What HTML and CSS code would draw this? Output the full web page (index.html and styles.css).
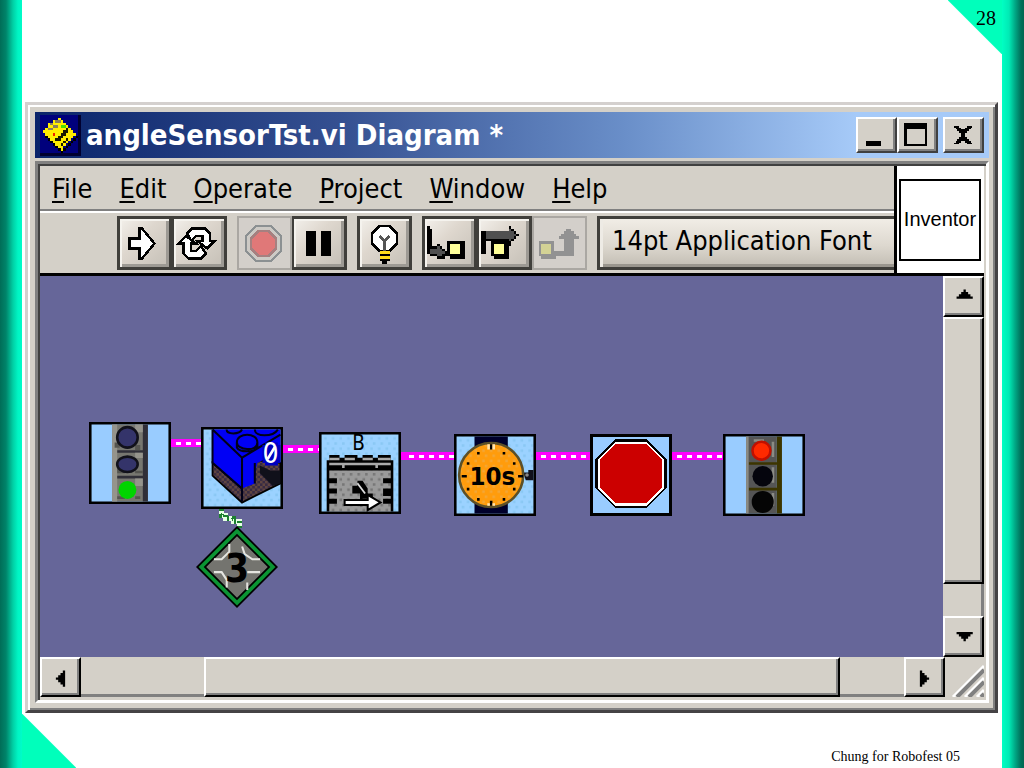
FILE: index.html
```
<!DOCTYPE html>
<html lang="en">
<head>
  <meta charset="utf-8" />
  <title>angleSensorTst.vi Diagram</title>
  <link rel="stylesheet" href="styles.css">
</head>

<body>
  <div class="slide">
    <main class="page">
      <section class="window">
        <header class="title-bar">
          <svg class="app-icon" viewBox="0 0 16 16" shape-rendering="crispEdges">
            <rect width="16" height="16" fill="#00007c" />
            <path d="M0 15h16v1H0zM15 0h1v16h-1z" fill="#000030" />
            <path d="M2 8h1v1h1v1h1v1h1v1h1v1h1v1h1v-1h1v-1h1v-1h1v-1h1V9h1V8h1v1h-1v1h-1v1h-1v1h-1v1h-1v1H9v1H8v-1H7v-1H6v-1H5v-1H4v-1H3V9H2z" fill="#000" />
            <path d="M7 1h1v1h1v1h1v1h1v1h1v1h1v1h1v1h-1v1h-1v1h-1v1h-1v1H9v2H8v-1H7v-1H6v-1H5v-1H4V9H3V8H2V7H1V6h1V5h1V3h2V2h2z" fill="#ffee00" />
            <path d="M6 2h2v1H6zM4 3h1v1H4zM3 5h2v1H3zM5 4h2v1H5z" fill="#8a7f5c" />
            <path d="M6 9h1V8h1V7h1V6h1V5h1v2h-1v1H9v1H8v1H6zM8 11h1v-1h1V9h1v1h-1v1H9v1H8z" fill="#181800" />
            <path d="M8 4h2v1H8z" fill="#48e000" />
            <path d="M5 7h1v1H5z" fill="#f02000" />
          </svg>
          <h1 class="title">angleSensorTst.vi Diagram *</h1>
          <div class="window-buttons">
            <button class="bevel window-button" type="button" aria-label="Minimize">
              <svg width="30" height="30" viewBox="0 0 30 30"><path d="M5 21h15v5H5z" /></svg>
            </button>
            <button class="bevel window-button" type="button" aria-label="Maximize">
              <svg width="30" height="30" viewBox="0 0 30 30"><path d="M2 3h23v23H2zM5 9v15h18V9z" fill-rule="evenodd" /></svg>
            </button>
            <button class="bevel window-button close" type="button" aria-label="Close">
              <svg width="30" height="30" viewBox="0 0 16 16" shape-rendering="crispEdges"><path d="M3 3h3v1h1v1h2V4h1V3h3v1h-1v1h-1v1h-1v1H9v2h1v1h1v1h1v1h1v1h-3v-1H9v-1H7v1H6v1H3v-1h1v-1h1v-1h1V9h1V7H6V6H5V5H4V4H3z" /></svg>
            </button>
          </div>
        </header>

        <div class="frame">
          <div class="top">
            <div class="bars">
              <nav class="menu-bar">
                <button type="button"><u>F</u>ile</button>
                <button type="button"><u>E</u>dit</button>
                <button type="button"><u>O</u>perate</button>
                <button type="button"><u>P</u>roject</button>
                <button type="button"><u>W</u>indow</button>
                <button type="button"><u>H</u>elp</button>
              </nav>
              <div class="toolbar">
                <div class="tool-group">
                  <button class="tool" type="button" aria-label="Run">
                    <svg viewBox="0 0 18 18"><path d="M3 7h4V3h1l5 6l-5 6H7v-4H3z" fill="#fff" stroke="#000" /></svg>
                  </button>
                  <button class="tool" type="button" aria-label="Run continuously">
                    <svg viewBox="0 0 18 18">
                      <path d="M4.500 5l2-2h5l2 2v3h2l-3 3l-4-3h2V6H8L6 8z" fill="#fff" stroke="#000" />
                      <path d="M1 9l3-3l4 3H6v3h2l2-2l2 3l-2 2H5l-2-2V9z" fill="#fff" stroke="#000" />
                    </svg>
                  </button>
                </div>
                <div class="tool-group">
                  <button class="tool" type="button" aria-label="Abort" disabled>
                    <svg viewBox="0 0 18 18">
                      <path d="M6 2h6l4 4v6l-4 4H6l-4-4V6z" fill="#cdcac5" stroke="#8b9092" />
                      <path d="M7 4h4l3 3v4l-3 3H7l-3-3V7z" fill="#e07878" stroke="#a58080" />
                    </svg>
                  </button>
                  <button class="tool" type="button" aria-label="Pause">
                    <svg viewBox="0 0 18 18"><path d="M4 4h4v10H4zM10 4h4v10h-4z" /></svg>
                  </button>
                </div>
                <div class="tool-group">
                  <button class="tool" type="button" aria-label="Highlight execution">
                    <svg viewBox="0 0 18 18">
                      <path d="M7 2h4l3 3v4l-3 3H7L4 9V5z" fill="#fff" stroke="#000" />
                      <path d="M7 6l2 2l2-2M9 7v5" fill="none" stroke="#555" />
                      <path d="M7 12h4v4h-1v1H8v-1H7z" fill="#000" />
                      <path d="M7 12h4v1H7zM7 14h4v1H7z" fill="#ffde1a" />
                    </svg>
                  </button>
                </div>
                <div class="tool-group">
                  <button class="tool" type="button" aria-label="Step into">
                    <svg viewBox="0 0 18 18">
                      <path d="M0 2h1v1h1v7h2V9h1v1h1v1h1v1h1v2H7v1H4v-1H1v-1H0z" />
                      <path d="M1 11h3v-1h1v1h1v1h1v1H6v1H4v-1H1z" fill="#505050" />
                      <path d="M8 8h7v7H9v-1H8z" /><path d="M9 9h4v4H9z" fill="#ffff99" />
                    </svg>
                  </button>
                  <button class="tool" type="button" aria-label="Step over">
                    <svg viewBox="0 0 18 18">
                      <path d="M0 4h11V2h1v1h1v1h1v1h1v1h-1v1h-1v1h-1v2h-1V8H2v5H0z" />
                      <path d="M2 4h9V3h1v1h1v1h1v1h-1v1h-1v1h-1V7H2z" fill="#505050" />
                      <path d="M4 8h7v7H5v-1H4z" /><path d="M5 9h4v4H5z" fill="#ffff99" />
                    </svg>
                  </button>
                  <button class="tool" type="button" aria-label="Step out" disabled>
                    <svg viewBox="0 0 18 18">
                      <path d="M1 8h6v4h4V7H9V6h1V5h1V4h1V3h2v1h1v1h1v1h1v1h-2v7H8v1H2v-1H1z" fill="#929292" />
                      <path d="M2 9h4v4H2z" fill="#d3d295" />
                    </svg>
                  </button>
                </div>
                <select class="font-select" aria-label="Text settings">
                  <option>14pt Application Font</option>
                </select>
              </div>
            </div>
            <div class="icon-pane"><div class="vi-icon">Inventor</div></div>
          </div>

          <div class="work-area">
            <div class="canvas">
              <svg class="wires" width="903" height="340" shape-rendering="crispEdges">
                <g stroke="#ff00ff" stroke-width="8">
                  <path d="M131 167h30M243 173h36M361 180h53M496 180h54M632 180h51" />
                </g>
                <g stroke="#fff" stroke-width="3" stroke-dasharray="5 5">
                  <path d="M136 167h25M248 173h31M369 180h45M501 180h49M637 180h46" />
                </g>
                <g fill="none" stroke-width="5">
                  <path d="M181 233v6h4v3h8v3h6v7" stroke="#e6ffe6" />
                  <path d="M181 233v6h4v3h8v3h6v7" stroke="#1c8030" stroke-dasharray="2 3" />
                </g>
              </svg>

              <svg class="node begin" viewBox="0 0 32 32">
                <rect width="32" height="32" />
                <path d="M1 1h30v30H1z" fill="#99ccff" />
                <path d="M9 1h13v30H9z" fill="#777770" />
                <path d="M21 1h2v30h-2zM10 11h11v1H10zM10 21h11v1H10z" fill="#302f38" />
                <path d="M9 1h2v30H9zM18 1h3v3h-3zM18 22h3v3h-3zM18 12h3v2h-3z" fill="#95948c" />
                <path d="M10 8h2v2h-2zM18 9h2v2h-2zM11 18h3v2h-3zM18 19h3v1h-3zM11 29h3v1h-3zM18 29h2v1h-2z" fill="#555550" />
                <ellipse cx="15" cy="6" rx="4" ry="4" fill="#34346a" stroke="#11111a" />
                <ellipse cx="15" cy="16.500" rx="4" ry="3" fill="#34346a" stroke="#11111a" />
                <circle cx="15" cy="26.500" r="3.500" fill="#00d400" />
              </svg>

              <svg class="node sensor" viewBox="0 0 32 32">
                <defs>
                  <pattern id="sky" width="3" height="4" patternUnits="userSpaceOnUse">
                    <rect width="3" height="4" fill="#9bd2ff" />
                    <path d="M0 0h1v1H0zM2 2h1v1H2z" fill="#8ac8f4" />
                  </pattern>
                  <pattern id="base" width="2" height="2" patternUnits="userSpaceOnUse">
                    <rect width="2" height="2" fill="#382b43" />
                    <path d="M0 0h1v1H0zM1 1h1v1H1z" fill="#604540" />
                  </pattern>
                </defs>
                <rect width="32" height="32" />
                <path d="M1 1h30v30H1z" fill="url(#sky)" />
                <path d="M4.500 14L16 24L22 13L31 14V22L16 29.500L4.500 19z" fill="url(#base)" stroke="#000" stroke-width=".7" />
                <path d="M4.500 1H31v12h-7l-2 1l-1 4v4l-5 2L4.500 14z" fill="#0000f5" />
                <path d="M4.500 1L16 12L31 3M16 12v17M4.500 1v13L16 24M10 1c0 2 5 2 6 0M21 1c0 3 7 3 9 0M14 6c0-4 8-4 8 0s-8 3-8 0v2c1 2 7 2 8 0V6M21 14v8" fill="none" stroke="#000018" stroke-width=".8" />
                <path d="M23 15l4 2h4v5l-3 1l-3-3l-2-2z" fill="#10101a" />
                <path d="M25 6h5v1h1v7h-1v1h-5v-1h-1V7h1z" fill="#0000c0" />
                <text class="zero" x="24" y="14">0</text>
                <path d="M26 12.500l3-5" stroke="#fff" />
              </svg>

              <svg class="node motor" viewBox="0 0 32 32">
                <defs>
                  <pattern id="metal" width="3" height="4" patternUnits="userSpaceOnUse">
                    <rect width="3" height="4" fill="#9a9a9a" />
                    <path d="M0 0h1v1H0zM2 2h1v1H2z" fill="#777" />
                  </pattern>
                </defs>
                <rect width="32" height="32" />
                <path d="M1 1h30v30H1z" fill="url(#sky)" />
                <path d="M4 9h4v1h2V9h5v1h2V9h4v1h2V9h5v2h1v20H3V11h1z" />
                <path d="M4 10h4v1H4zM10 10h4v1h-4zM17 10h4v1h-4zM23 10h5v1h-5zM4 12h24v1H4zM9 13h1v1H9zM22 13h1v1h-1z" fill="#aaa" />
                <path d="M4 15h24v3h-3v2h3v2h-3v3h3v1h-3v2h3v3H4v-3h3v-2H4v-2h3v-2H4v-2h3v-2H4z" fill="url(#metal)" />
                <text class="label" x="13" y="7">B</text>
                <path d="M13 21h2v-2h2l2 3v2h2v2h-4v3h-1v-5h-3z" />
                <path d="M15 20l3 4" stroke="#ddd" stroke-width=".7" />
                <path d="M10 26.500h9v-2l5 3l-5 3v-2h-9z" fill="#fff" stroke="#000" stroke-width=".8" />
              </svg>

              <svg class="node timer" viewBox="0 0 32 32">
                <defs>
                  <pattern id="dial" width="3" height="4" patternUnits="userSpaceOnUse">
                    <rect width="3" height="4" fill="#ff9c0c" />
                    <path d="M0 0h1v1H0zM2 2h1v1H2z" fill="#f3a636" />
                  </pattern>
                </defs>
                <rect width="32" height="32" />
                <path d="M1 1h30v30H1z" fill="url(#sky)" />
                <path d="M8 1h13v30H8z" fill="#00002b" />
                <path d="M27 15h2v-1h2v4h-3z" fill="#11111c" />
                <circle cx="14.500" cy="16" r="12.500" fill="url(#dial)" stroke="#5c5028" />
                <path d="M9 7h1v1H9zM19 7h1v1h-1zM5 11h1v1H5zM23 11h1v1h-1zM5 21h1v1H5zM23 21h1v1h-1zM9 25h1v1H9zM19 25h1v1h-1zM14 4h1v2h-1zM14 26h1v2h-1zM3 16h2v1H3zM25 16h2v1h-2z" />
                <path d="M13 4h1v2h-1zM15 4h1v2h-1zM13 27h1v1h-1zM15 27h1v1h-1z" fill="#ffe3ae" />
                <text class="time" x="15" y="20" text-anchor="middle">10s</text>
                <circle cx="28.500" cy="16" r=".7" fill="#888" />
              </svg>

              <svg class="node stop" viewBox="0 0 32 32" shape-rendering="crispEdges">
                <rect width="32" height="32" />
                <path d="M1 1h30v30H1z" fill="#99ccff" />
                <path d="M10 2h12l8 8v11l-8 8H10l-8-8V10z" />
                <path d="M10 3h12l7 7v11l-7 7H10l-7-7V10z" fill="#fff" />
                <path d="M10 4h12l6 6v11l-6 6H10l-6-6V10z" fill="#cc0000" />
              </svg>

              <svg class="node end" viewBox="0 0 32 32">
                <rect width="32" height="32" />
                <path d="M1 1h30v30H1z" fill="#99ccff" />
                <path d="M9 1h12v30H9z" fill="#555" />
                <path d="M21 1h2v30h-2zM10 11h11v1H10zM10 21h11v1H10z" fill="#3c3500" />
                <path d="M9 1h1v30H9zM19 3h1v6h-1zM19 13h1v6h-1zM19 23h1v5h-1zM12 2h4v1h-4z" fill="#8b8b84" />
                <circle cx="15" cy="6.500" r="3.500" fill="#ff2a00" stroke="#c01000" />
                <circle cx="15.500" cy="16.500" r="4" fill="#05050d" />
                <circle cx="15.500" cy="26.500" r="4.300" fill="#050505" />
              </svg>

              <svg class="node modifier" viewBox="0 0 32 32">
                <path d="M16 0L32 16L16 32L0 16z" />
                <path d="M16 1L31 16L16 31L1 16z" fill="#0b9433" />
                <path d="M16 3L29 16L16 29L3 16z" />
                <path d="M16 4L28 16L16 28L4 16z" fill="#74746f" />
                <path d="M13 7v3l-3 3H7M18 8l1 3l3 2h3M7 18h3l2 3v3M20 18h5M20 22v3" fill="none" stroke="#e5e5e0" stroke-width=".8" />
                <text class="port" x="16" y="22" text-anchor="middle">3</text>
              </svg>
            </div>

            <div class="scroll vertical">
              <button class="bevel arrow" type="button" aria-label="Scroll up">
                <svg viewBox="0 0 16 16"><path d="M8 5h1v1h1v1h1v1h1v1H5V8h1V7h1V6h1z" /></svg>
              </button>
              <div class="bevel thumb"></div>
              <div class="track"></div>
              <button class="bevel arrow" type="button" aria-label="Scroll down">
                <svg viewBox="0 0 16 16"><path d="M5 6h7v1h-1v1h-1v1H9v1H8V9H7V8H6V7H5z" /></svg>
              </button>
            </div>
          </div>

          <div class="bottom">
            <div class="scroll horizontal">
              <button class="bevel arrow" type="button" aria-label="Scroll left">
                <svg viewBox="0 0 16 16"><path d="M10 5v7H9v-1H8v-1H7V9H6V8h1V7h1V6h1V5z" /></svg>
              </button>
              <div class="track before"></div>
              <div class="bevel thumb"></div>
              <div class="track after"></div>
              <button class="bevel arrow" type="button" aria-label="Scroll right">
                <svg viewBox="0 0 16 16"><path d="M6 5v7h1v-1h1v-1h1V9h1V8H9V7H8V6H7V5z" /></svg>
              </button>
            </div>
            <svg class="grip" width="39" height="40" viewBox="0 0 39 40">
              <path d="M8 40L39 9M20 40L39 21M32 40l7-7" stroke="#fff" stroke-width="3" />
              <path d="M12 40L39 13M24 40L39 25M36 40l3-3" stroke="#808080" stroke-width="4" />
            </svg>
          </div>
        </div>
      </section>

      <footer class="credit">Chung for Robofest 05</footer>
    </main>
    <div class="page-number">28</div>
  </div>
</body>
</html>
```
FILE: styles.css
```
* {
  box-sizing: border-box;
}

body {
  margin: 0;
  background: #fff;
  color: #000;
  font-family: "DejaVu Sans Condensed", "DejaVu Sans", sans-serif;
  font-size: 27px;
}

button, select {
  margin: 0;
  padding: 0;
  border: 0;
  border-radius: 0;
  color: inherit;
  font: inherit;
}

svg {
  display: block;
}

/* Slide background */
.slide {
  position: relative;
  min-height: 100vh;
  padding: 0 22px;
  background:
    linear-gradient(90deg, #006d57 0, #00846a 6px, #00d0a5 13px, #00f5c4 18px, #00fcc8 22px) left / 22px 100% no-repeat,
    linear-gradient(90deg, #00ffc3 0, #00eab5 7px, #00a986 13px, #00705a 19px, #006650 22px) right / 22px 100% no-repeat,
    #fff;
}

.page {
  display: flex;
  flex-direction: column;
  min-height: 100vh;
  padding: 102px 4px 0 3px;
  background:
    linear-gradient(45deg, #00ffbb 38px, transparent 39px) left bottom / 54px 54px no-repeat,
    linear-gradient(225deg, #00ffbb 38px, transparent 39px) right top / 54px 54px no-repeat;
}

.page-number {
  position: absolute;
  top: 6px;
  right: 28px;
  font: 20px/24px "Liberation Serif", serif;
}

.credit {
  height: 55px;
  padding: 35px 38px 0 0;
  font: 14px/18px "Liberation Serif", serif;
  text-align: right;
}

/* Window */
.window {
  display: flex;
  flex: 1;
  flex-direction: column;
  padding: 7px 6px 7px 7px;
  border: solid;
  border-width: 3px;
  border-color: #d4d0ce #454345 #454345 #d4d0ce;
  background: #d4d0c8;
  box-shadow: inset 2px 2px #fff, inset -2px -2px #808080;
}

.title-bar {
  display: flex;
  align-items: center;
  height: 46px;
  margin-bottom: 3px;
  padding: 0 5px;
  background: linear-gradient(90deg, #0a246a, #355091 32%, #6a8fc9 62%, #a6caf8 86%);
}

.app-icon {
  width: 41px;
  height: 41px;
}

.title {
  flex: 1;
  margin: 0 0 0 5px;
  color: #fff;
  font-size: 29px;
  font-weight: bold;
  line-height: 40px;
  white-space: nowrap;
}

.bevel {
  border: 2px solid;
  border-color: #fff #404040 #404040 #fff;
  background: #d4d0c8;
  box-shadow: inset -2px -2px #808080;
}

.window-buttons {
  display: flex;
}

.window-button {
  width: 41px;
  height: 36px;
  padding: 0 3px;
}

.close {
  margin-left: 5px;
}

.frame {
  display: flex;
  flex: 1;
  flex-direction: column;
  padding: 2px 2px 3px 2px;
  border: 3px solid;
  border-color: #808080 #fff #fff #808080;
  box-shadow: inset 2px 2px #404040;
}

.top {
  display: flex;
  border-bottom: 3px solid #000;
}

.bars {
  flex: 1;
  min-width: 0;
}

.menu-bar {
  display: flex;
  gap: 27px;
  height: 45px;
  padding: 5px 12px;
  border-bottom: 2px solid #808080;
  white-space: nowrap;
}

.menu-bar button {
  background: none;
  line-height: 36px;
}

.menu-bar u {
  text-decoration-thickness: 2px;
  text-underline-offset: 3px;
}

.toolbar {
  display: flex;
  gap: 10px;
  height: 61px;
  padding: 3px 0 2px 77px;
  border-top: 2px solid #fff;
}

.tool-group {
  display: flex;
}

.tool {
  width: 55px;
  height: 54px;
  padding: 1px 2px;
  border: 3px solid #403f3b;
  background: linear-gradient(135deg, #f3f0eb, #ded7ce 40%, #c4bfb6);
  box-shadow: inset 2px 2px #f5f3ee, inset -3px -3px #9d9a94;
}

.tool + .tool {
  border-left-width: 2px;
}

.tool:disabled {
  border: 2px solid #aaa7a2;
  background: #d3cfca;
  box-shadow: none;
}

.tool svg {
  width: 45px;
  height: 45px;
  shape-rendering: crispEdges;
}

.font-select {
  flex: 1;
  min-width: 0;
  height: 54px;
  padding: 0 0 6px 12px;
  border: 3px solid #403f3b;
  border-right: 0;
  background: linear-gradient(#f1ede6, #ddd8cf 55%, #c2bdb3);
  box-shadow: inset 3px 0 #eeebe5, inset 0 -3px #9a968e;
  appearance: none;
}

.icon-pane {
  width: 90px;
  padding: 13px 3px 12px 2px;
  border-left: 3px solid #000;
  background: #fff;
}

.vi-icon {
  height: 82px;
  border: 2px solid #000;
  font-family: "Liberation Sans", sans-serif;
  font-size: 20px;
  line-height: 77px;
  text-align: center;
}

/* Diagram */
.work-area {
  display: flex;
  flex: 1;
  min-height: 340px;
}

.canvas {
  position: relative;
  flex: 1;
  overflow: hidden;
  background: #666699;
}

.wires {
  position: absolute;
  top: 0;
  left: 0;
}

.node {
  position: absolute;
  width: 82px;
  height: 82px;
}

.begin { left: 49px; top: 146px; }
.sensor { left: 161px; top: 151px; }
.motor { left: 279px; top: 156px; }
.timer { left: 414px; top: 158px; }
.stop { left: 550px; top: 158px; }
.end { left: 683px; top: 158px; }
.modifier { left: 156px; top: 250px; }

.node text {
  font-family: "DejaVu Sans Condensed", sans-serif;
}

.node .zero {
  fill: #fff;
  font-size: 11px;
}

.node .label {
  font-size: 8px;
}

.node .time {
  font-size: 10px;
  font-weight: bold;
}

.node .port {
  font-size: 15px;
  font-weight: bold;
}

/* Scroll bars */
.scroll {
  display: flex;
  background: #d4d0c8;
}

.scroll .bevel {
  border-right-color: #000;
  border-bottom-color: #000;
}

.vertical {
  flex-direction: column;
  width: 41px;
}

.arrow {
  flex: none;
  width: 41px;
  height: 41px;
}

.arrow svg {
  width: 37px;
  height: 37px;
}

.vertical .thumb {
  flex: 268;
}

.vertical .track {
  flex: 33;
  border-right: 3px solid #808080;
}

.bottom {
  display: flex;
}

.horizontal {
  flex: 1;
}

.horizontal .arrow {
  height: 40px;
}

.horizontal .track {
  border-bottom: 3px solid #808080;
}

.horizontal .before {
  flex: 124;
}

.horizontal .thumb {
  flex: 635;
}

.horizontal .after {
  flex: 64;
}
```
